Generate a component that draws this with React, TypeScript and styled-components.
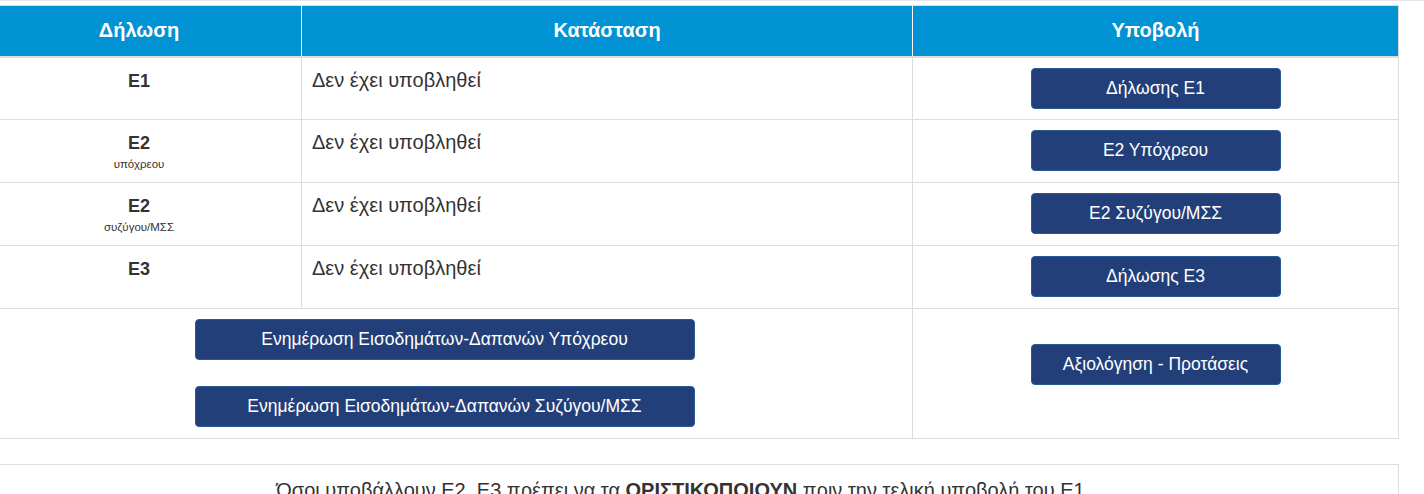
import { createGlobalStyle } from "styled-components";
import styled from "styled-components";

const GlobalStyle = createGlobalStyle`
  html, body {
    margin: 0;
    padding: 0;
    background: #ffffff;
    font-family: "Liberation Sans", Arial, sans-serif;
    color: #333333;
    overflow: hidden;
  }
`;

const rows = [
  { code: "Ε1", sub: "", status: "Δεν έχει υποβληθεί", action: "Δήλωσης Ε1" },
  { code: "Ε2", sub: "υπόχρεου", status: "Δεν έχει υποβληθεί", action: "Ε2 Υπόχρεου" },
  { code: "Ε2", sub: "συζύγου/ΜΣΣ", status: "Δεν έχει υποβληθεί", action: "Ε2 Συζύγου/ΜΣΣ" },
  { code: "Ε3", sub: "", status: "Δεν έχει υποβληθεί", action: "Δήλωσης Ε3" },
];

const App = () => {
  return (
    <>
      <GlobalStyle />
      <TopRule />
      <Page>
        <Table>
          <colgroup>
            <col style={{ width: 325 }} />
            <col style={{ width: 611 }} />
            <col />
          </colgroup>
          <thead>
            <tr>
              <HeadCell>Δήλωση</HeadCell>
              <HeadCell>Κατάσταση</HeadCell>
              <HeadCell>Υποβολή</HeadCell>
            </tr>
          </thead>
          <tbody>
            {rows.map((row, i) => (
              <tr key={i}>
                <CodeCell>
                  <Code>{row.code}</Code>
                  {row.sub && <Sub>{row.sub}</Sub>}
                </CodeCell>
                <StatusCell>{row.status}</StatusCell>
                <ActionCell>
                  <NavyButton $width={250}>{row.action}</NavyButton>
                </ActionCell>
              </tr>
            ))}
            <tr>
              <UpdateCell colSpan={2}>
                <ButtonStack>
                  <NavyButton $width={500}>
                    Ενημέρωση Εισοδημάτων-Δαπανών Υπόχρεου
                  </NavyButton>
                  <NavyButton $width={500}>
                    Ενημέρωση Εισοδημάτων-Δαπανών Συζύγου/ΜΣΣ
                  </NavyButton>
                </ButtonStack>
              </UpdateCell>
              <ReviewCell>
                <NavyButton $width={250}>Αξιολόγηση - Προτάσεις</NavyButton>
              </ReviewCell>
            </tr>
          </tbody>
        </Table>
        <Notice>
          Όσοι υποβάλλουν Ε2, Ε3 πρέπει να τα <strong>ΟΡΙΣΤΙΚΟΠΟΙΟΥΝ</strong>{" "}
          πριν την τελική υποβολή του Ε1
        </Notice>
      </Page>
    </>
  );
};

const TopRule = styled.div`
  height: 1px;
  background: #e6e6e6;
`;

const Page = styled.div`
  width: 1423px;
  margin-left: -24px;
  padding-top: 4px;
`;

const Table = styled.table`
  width: 100%;
  border-collapse: collapse;
  border: 1px solid #dddddd;
  table-layout: fixed;
`;

const HeadCell = styled.th`
  height: 51px;
  box-sizing: border-box;
  padding: 0 10px;
  background: #0092d2;
  color: #ffffff;
  font-size: 20px;
  font-weight: bold;
  text-align: center;
  vertical-align: middle;
  border-left: 1px solid #ffffff;
  border-bottom: 2px solid #dddddd;

  &:first-child {
    border-left: 1px solid #dddddd;
  }
`;

const BodyCell = styled.td`
  border: 1px solid #dddddd;
  vertical-align: top;
  font-size: 20px;
  box-sizing: border-box;
  height: 63px;
`;

const CodeCell = styled(BodyCell)`
  padding: 14px 10px 0;
  text-align: center;
`;

const Code = styled.div`
  font-size: 18px;
  font-weight: bold;
  line-height: 18px;
`;

const Sub = styled.div`
  font-size: 11.5px;
  line-height: 14px;
  margin-top: 5px;
`;

const StatusCell = styled(BodyCell)`
  padding: 12px 10px 0;
  line-height: 20px;
`;

const ActionCell = styled(BodyCell)`
  padding: 10px 10px 0;
  text-align: center;
`;

const UpdateCell = styled(BodyCell)`
  padding: 10px 10px 10px;
  height: 130px;
`;

const ButtonStack = styled.div`
  display: flex;
  flex-direction: column;
  align-items: center;
  gap: 26px;
`;

const ReviewCell = styled(BodyCell)`
  padding: 35px 10px 0;
  text-align: center;
`;

const NavyButton = styled.button<{ $width: number }>`
  width: ${(p) => p.$width}px;
  height: 41px;
  padding: 0 12px;
  background: #223f7a;
  border: 1px solid #2a5a9a;
  border-radius: 4px;
  color: #ffffff;
  font-family: "Liberation Sans", Arial, sans-serif;
  font-size: 17.5px;
  cursor: pointer;
`;

const Notice = styled.div`
  margin-top: 25px;
  border: 1px solid #dddddd;
  padding: 13px 24px 13px 10px;
  text-align: center;
  font-size: 20px;
  line-height: 24px;
  color: #333333;
`;

export default App;
